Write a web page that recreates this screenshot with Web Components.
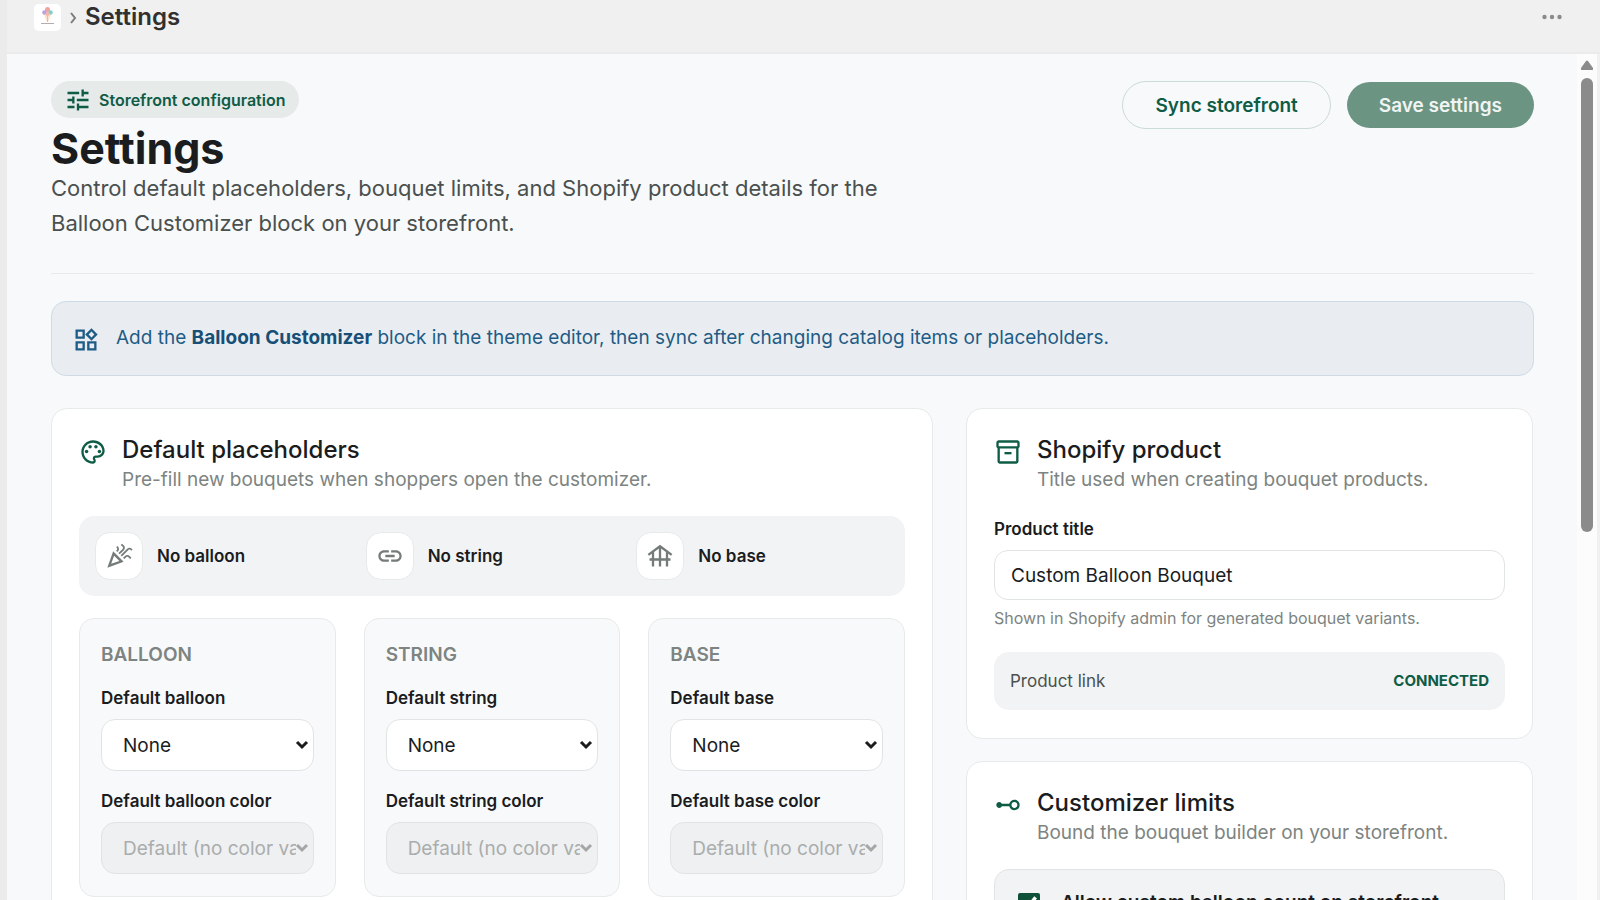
<!DOCTYPE html>
<html lang="en">
<head>
<meta charset="utf-8">
<meta name="viewport" content="width=device-width, initial-scale=1">
<title>Settings</title>
<style>
	:root {
		--ink: #1a1c1e;
		--muted: #7d8481;
		--body: #4a504e;
		--green: #0f5c46;
		--line: #e7eaea;
		--page: #f8f9fb;
		--soft: #f2f3f5;
	}

	body {
		margin: 0;
		font-family: Inter, sans-serif;
		color: var(--ink);
	}
</style>
</head>
<body>
<app-shell>
	<page-header slot="page">
		<span slot="badge">Storefront configuration</span>
		<span slot="title">Settings</span>
		<span slot="text">Control default placeholders, bouquet limits, and Shopify product details for the Balloon Customizer block on your storefront.</span>
	</page-header>

	<info-banner slot="page">Add the <strong>Balloon Customizer</strong> block in the theme editor, then sync after changing catalog items or placeholders.</info-banner>

	<settings-columns slot="page">
		<settings-card icon="palette" heading="Default placeholders" text="Pre-fill new bouquets when shoppers open the customizer.">
			<preview-bar></preview-bar>
			<placeholder-grid></placeholder-grid>
		</settings-card>

		<settings-card slot="side" icon="archive" heading="Shopify product" text="Title used when creating bouquet products.">
			<text-field label="Product title" value="Custom Balloon Bouquet" hint="Shown in Shopify admin for generated bouquet variants."></text-field>
			<status-row label="Product link">Connected</status-row>
		</settings-card>

		<settings-card slot="side" icon="range" heading="Customizer limits" text="Bound the bouquet builder on your storefront.">
			<check-row>Allow custom balloon count on storefront</check-row>
		</settings-card>
	</settings-columns>
</app-shell>

<script>
const icons = {
	tune: '<path d="M3 17v2h6v-2H3zM3 5v2h10V5H3zm10 16v-2h8v-2h-8v-2h-2v6h2zM7 9v2H3v2h4v2h2V9H7zm14 4v-2H11v2h10zm-6-4h2V7h4V5h-4V3h-2v6z"/>',
	widgets: '<path fill-rule="evenodd" d="M16.7 2l5.3 5.3-5.3 5.4-5.4-5.4zM16.7 4.8l-2.5 2.5 2.5 2.6 2.5-2.6zM3 3h8v8H3zM5 5v4h4V5zM3 13h8v8H3zM5 15v4h4v-4zM13 13h8v8h-8zM15 15v4h4v-4z"/>',
	palette: '<path d="M12 22C6.5 22 2 17.5 2 12S6.5 2 12 2s10 4 10 9c0 3.3-2.7 6-6 6h-1.8c-.3 0-.5.2-.5.5 0 .1.1.2.1.3.4.5.6 1.1.6 1.7.1 1.4-1 2.5-2.4 2.5zm0-18c-4.4 0-8 3.6-8 8s3.6 8 8 8c.3 0 .5-.2.5-.5 0-.2-.1-.3-.1-.4-.4-.5-.6-1.1-.6-1.6 0-1.4 1.1-2.5 2.5-2.5H16c2.2 0 4-1.8 4-4 0-3.9-3.6-7-8-7z"/><circle cx="6.5" cy="11.5" r="1.5"/><circle cx="9.5" cy="7.5" r="1.5"/><circle cx="14.5" cy="7.5" r="1.5"/><circle cx="17.5" cy="11.5" r="1.5"/>',
	archive: '<path d="M20 2H4c-1 0-2 .9-2 2v3.01c0 .72.43 1.34 1 1.69V20c0 1.1 1.1 2 2 2h14c.9 0 2-.9 2-2V8.7c.57-.35 1-.97 1-1.69V4c0-1.1-1-2-2-2zm-1 18H5V9h14v11zm1-13H4V4h16v3z"/><path d="M9 12h6v2H9z"/>',
	range: '<path d="M17.500 7.500c-2.100 0-3.900 1.500-4.400 3.500H6.700C6.300 10.100 5.500 9.500 4.500 9.500 3.100 9.500 2 10.600 2 12s1.100 2.500 2.500 2.500c1 0 1.800-.6 2.200-1.500h6.400c.5 2 2.300 3.500 4.400 3.500 2.500 0 4.500-2 4.500-4.500s-2-4.500-4.500-4.500zm0 7c-1.400 0-2.500-1.100-2.500-2.500s1.100-2.500 2.500-2.500S20 10.600 20 12s-1.100 2.500-2.500 2.500z"/>',
	celebration: '<path d="M2 22l14-5-9-9-5 14zm3.300-3.300L7.800 11.700l4.500 4.500-7 2.500zM14.500 12.500l5.600-5.600c.5-.5 1.300-.5 1.800 0l.6.6 1.100-1.100-.6-.6c-1.100-1.100-2.900-1.100-4 0l-5.600 5.600 1.100 1.100zM10.100 6.900l-.6.6 1.100 1.100.6-.6c1.100-1.100 1.100-2.900 0-4l-.6-.6-1.100 1.100.6.5c.5.5.5 1.400 0 1.900zM17.100 11.900l-1.600 1.600 1.100 1.100 1.600-1.600c.5-.5 1.300-.5 1.800 0l1.600 1.600 1.100-1.100-1.600-1.600c-1.100-1.100-2.900-1.100-4 0zM15.100 5.900l-3.600 3.600 1.100 1.100 3.600-3.600c1.100-1.100 1.100-2.900 0-4l-1.600-1.600-1.100 1.100 1.600 1.600c.5.500.5 1.300 0 1.800z"/>',
	link: '<path d="M3.900 12c0-1.700 1.400-3.100 3.100-3.100h4V7H7c-2.800 0-5 2.200-5 5s2.200 5 5 5h4v-1.900H7c-1.700 0-3.100-1.400-3.100-3.100zM8 13h8v-2H8v2zm9-6h-4v1.900h4c1.700 0 3.100 1.400 3.100 3.100s-1.400 3.100-3.100 3.100h-4V17h4c2.800 0 5-2.200 5-5s-2.200-5-5-5z"/>',
	gazebo: '<path fill="none" stroke="currentColor" stroke-width="2" d="M2 11L12 3.600 22 11M3 15h18M6 8.500V21M12 4v17M18 8.500V21"/>'
}

const icon = (name, size = 28) => `
	<svg width="${size}" height="${size}" viewBox="0 0 24 24" fill="currentColor" aria-hidden="true">${icons[name]}</svg>
`

// shared by every element, goes in front of its own rules
const base = `
	*, :host {
		box-sizing: border-box;
	}

	:host {
		display: block;
	}

	h1, h2, h3, p {
		margin: 0;
	}

	svg {
		display: block;
		flex: none;
	}
`

function render(el, css, html) {
	const shadow = el.attachShadow({ mode: 'open' })
	const template = document.createElement('template')
	template.innerHTML = `<style>${base}${css}</style>${html}`
	shadow.appendChild(template.content.cloneNode(true))
}

class AppShell extends HTMLElement {
	constructor() {
		super()
		render(this, `
			:host {
				display: flex;
				flex-direction: column;
				height: 100vh;
				overflow: hidden;
				border-left: 7px solid #ebebeb;
				background: #f0f0f0;
			}

			header {
				flex: none;
				display: flex;
				align-items: center;
				padding: 3px 35px 21px 27px;
				border-bottom: 2px solid #ebebeb;
			}

			.logo {
				width: 27px;
				height: 27px;
				border-radius: 5px;
				background: #fff;
			}

			.arrow {
				margin: 0 7px 0 8px;
				color: #7b7b7b;
			}

			h1 {
				font-size: 24px;
				line-height: 28px;
				font-weight: 600;
				color: #303030;
			}

			.more {
				margin-left: auto;
				padding: 0;
				border: 0;
				background: none;
				color: #8a8a8a;
			}

			.frame {
				flex: 1;
				min-height: 0;
				display: flex;
				padding-right: 3px;
			}

			main {
				flex: 1;
				min-width: 0;
				overflow: hidden;
				padding: 27px 43px 28px 44px;
				background: var(--page);
			}

			.scroll {
				flex: none;
				display: flex;
				flex-direction: column;
				align-items: center;
				gap: 8px;
				width: 20px;
				padding-top: 6px;
				background: #fcfcfc;
				color: #8b8b8b;
			}

			.thumb {
				width: 12px;
				height: 54%;
				border-radius: 6px;
				background: #8b8b8b;
			}
		`, `
			<header>
				<svg class="logo" viewBox="0 0 27 27" aria-hidden="true">
					<path d="M10 11h7l-3 7h-1z" fill="#fbe3cf"/>
					<circle cx="13.500" cy="5.500" r="2.500" fill="#f4a09c"/>
					<circle cx="10.500" cy="8.500" r="2.300" fill="#b9a0de"/>
					<circle cx="16.500" cy="8.500" r="2.300" fill="#86cfc8"/>
					<circle cx="13.500" cy="10" r="2" fill="#f7b6a4"/>
					<path d="M13.500 12v6" stroke="#f0bd92"/>
					<path d="M7 19.500h13" stroke="#b5adab"/>
				</svg>
				<svg class="arrow" width="9" height="14" viewBox="0 0 9 14" fill="none" stroke="currentColor" stroke-width="2" aria-hidden="true"><path d="M2 3l4 5-4 5"/></svg>
				<h1>Settings</h1>
				<button class="more" type="button" aria-label="More actions">
					<svg width="26" height="14" viewBox="0 0 26 14" fill="currentColor"><circle cx="5.500" cy="7" r="2.200"/><circle cx="13" cy="7" r="2.200"/><circle cx="20.500" cy="7" r="2.200"/></svg>
				</button>
			</header>
			<div class="frame">
				<main><slot name="page"></slot></main>
				<div class="scroll" aria-hidden="true">
					<svg width="12" height="10" viewBox="0 0 12 10" fill="currentColor"><path d="M5 1q1-1 2 0l5 7q.5 2-1 2H1Q-.5 10 0 8z"/></svg>
					<div class="thumb"></div>
				</div>
			</div>
		`)
	}
}

class PageHeader extends HTMLElement {
	constructor() {
		super()
		render(this, `
			:host {
				display: flex;
				justify-content: space-between;
				align-items: flex-start;
				padding-bottom: 32px;
				border-bottom: 1px solid var(--line);
			}

			.badge {
				display: inline-flex;
				align-items: center;
				gap: 7px;
				height: 37px;
				padding: 0 14px 0 13px;
				border-radius: 19px;
				background: #e6eae9;
				color: var(--green);
				font-size: 16px;
				font-weight: 600;
			}

			.intro {
				display: flex;
				flex-direction: column;
				align-items: flex-start;
			}

			h1 {
				margin-top: 8px;
				font-size: 43px;
				line-height: 45px;
				font-weight: 700;
			}

			p {
				max-width: 880px;
				font-size: 22px;
				line-height: 35px;
				color: var(--body);
			}

			.actions {
				display: flex;
				align-items: center;
				gap: 16px;
			}

			button {
				padding: 12px 32px 10px;
				border: 0;
				border-radius: 24px;
				font: 600 19px/24px Inter, sans-serif;
				white-space: nowrap;
			}

			.sync {
				border: 1px solid #cbdbd6;
				background: none;
				color: var(--green);
			}

			.save {
				background: #6b9483;
				color: #f0f4f3;
			}
		`, `
			<div class="intro">
				<div class="badge">${icon('tune')}<slot name="badge"></slot></div>
				<h1><slot name="title"></slot></h1>
				<p><slot name="text"></slot></p>
			</div>
			<div class="actions">
				<button class="sync" type="button">Sync storefront</button>
				<button class="save" type="button" disabled>Save settings</button>
			</div>
		`)
	}
}

class InfoBanner extends HTMLElement {
	constructor() {
		super()
		render(this, `
			:host {
				display: flex;
				align-items: flex-start;
				gap: 16px;
				margin-top: 27px;
				padding: 22px 20px 21px;
				border: 1px solid #cfdbe4;
				border-radius: 15px;
				background: #e9edf2;
				color: #1f5c85;
				font-size: 19px;
				line-height: 27px;
			}

			svg {
				margin-top: 2px;
			}

			::slotted(strong) {
				color: #174f77;
			}
		`, `${icon('widgets')}<div><slot></slot></div>`)
	}
}

class SettingsColumns extends HTMLElement {
	constructor() {
		super()
		render(this, `
			:host {
				display: grid;
				grid-template-columns: 14fr 9fr;
				gap: 33px;
				margin: 32px 1px 0 0;
			}

			.side {
				display: flex;
				flex-direction: column;
				gap: 22px;
				min-width: 0;
			}
		`, `
			<slot></slot>
			<div class="side"><slot name="side"></slot></div>
		`)
	}
}

class SettingsCard extends HTMLElement {
	constructor() {
		super()
		render(this, `
			:host {
				display: flex;
				flex-direction: column;
				gap: 22px;
				min-width: 0;
				padding: 26px 27px 28px;
				border: 1px solid var(--line);
				border-radius: 16px;
				background: #fff;
			}

			header {
				display: flex;
				gap: 15px;
			}

			svg {
				margin-top: 3px;
				color: var(--green);
			}

			h2 {
				font-size: 24px;
				line-height: 30px;
				font-weight: 500;
			}

			p {
				font-size: 19px;
				line-height: 29px;
				color: var(--muted);
			}
		`, `
			<header>
				${icon(this.getAttribute('icon'))}
				<div>
					<h2>${this.getAttribute('heading')}</h2>
					<p>${this.getAttribute('text')}</p>
				</div>
			</header>
			<slot></slot>
		`)
	}
}

class PreviewBar extends HTMLElement {
	constructor() {
		super()
		const items = [['celebration', 'No balloon'], ['link', 'No string'], ['gazebo', 'No base']]
		render(this, `
			:host {
				display: grid;
				grid-template-columns: repeat(3, 1fr);
				gap: 18px;
				padding: 16px;
				border-radius: 15px;
				background: var(--soft);
			}

			.item {
				display: flex;
				align-items: center;
				gap: 14px;
				font-size: 17px;
				font-weight: 600;
			}

			.tile {
				display: grid;
				place-items: center;
				width: 48px;
				height: 48px;
				border: 1px solid var(--line);
				border-radius: 15px;
				background: #fff;
				color: #747b78;
			}
		`, items.map(([name, text]) => `
			<div class="item"><div class="tile">${icon(name)}</div>${text}</div>
		`).join(''))
	}
}

class PlaceholderGrid extends HTMLElement {
	constructor() {
		super()
		render(this, `
			:host {
				display: grid;
				grid-template-columns: repeat(3, minmax(0, 1fr));
				gap: 28px;
			}

			section {
				padding: 22px 21px;
				border: 1px solid var(--line);
				border-radius: 15px;
				background: var(--page);
			}

			h3 {
				font-size: 19px;
				line-height: 28px;
				font-weight: 600;
				text-transform: uppercase;
				color: var(--muted);
			}

			label {
				display: block;
				margin: 16px 0 8px;
				font-size: 17px;
				line-height: 26px;
				font-weight: 600;
			}

			select + svg + label {
				margin-top: 17px;
			}

			.pick {
				display: grid;
				align-items: center;
			}

			.pick + label {
				margin-top: 17px;
			}

			.pick > * {
				grid-area: 1 / 1;
			}

			.pick svg {
				justify-self: end;
				margin-right: 5px;
				color: var(--ink);
				pointer-events: none;
			}

			.pick :disabled + svg {
				color: #a3a7a6;
			}

			select {
				appearance: none;
				width: 100%;
				height: 52px;
				padding: 0 17px 0 21px;
				border: 1px solid #e1e4e4;
				border-radius: 14px;
				background-color: #fff;
				color: var(--ink);
				font: 400 19px Inter, sans-serif;
			}

			select:disabled {
				background-color: #eff0f2;
				color: #a9adac;
				opacity: 1;
			}
		`, ['balloon', 'string', 'base'].map((part) => `
			<section>
				<h3>${part}</h3>
				<label for="${part}">Default ${part}</label>
				<div class="pick">
					<select id="${part}"><option>None</option></select>
					${this.chevron}
				</div>
				<label for="${part}-color">Default ${part} color</label>
				<div class="pick">
					<select id="${part}-color" disabled><option>Default (no color variants)</option></select>
					${this.chevron}
				</div>
			</section>
		`).join(''))
	}

	get chevron() {
		return `<svg width="14" height="10" viewBox="0 0 14 10" fill="none" stroke="currentColor" stroke-width="3" aria-hidden="true"><path d="M2 2l5 5 5-5"/></svg>`
	}
}

class TextField extends HTMLElement {
	constructor() {
		super()
		render(this, `
			label {
				display: block;
				margin-bottom: 8px;
				font-size: 17px;
				line-height: 26px;
				font-weight: 600;
			}

			input {
				display: block;
				width: 100%;
				height: 50px;
				padding: 0 16px;
				border: 1px solid #e1e4e4;
				border-radius: 14px;
				background: #fff;
				color: var(--ink);
				font: 400 19px Inter, sans-serif;
			}

			p {
				margin-top: 6px;
				font-size: 16px;
				line-height: 24px;
				color: var(--muted);
			}
		`, `
			<label for="field">${this.getAttribute('label')}</label>
			<input id="field" type="text" value="${this.getAttribute('value')}">
			<p>${this.getAttribute('hint')}</p>
		`)
	}
}

class StatusRow extends HTMLElement {
	constructor() {
		super()
		render(this, `
			:host {
				display: flex;
				justify-content: space-between;
				align-items: center;
				padding: 16px;
				border-radius: 15px;
				background: var(--soft);
				font-size: 17px;
				line-height: 26px;
				color: var(--body);
			}

			strong {
				font-size: 15px;
				text-transform: uppercase;
				color: var(--green);
			}
		`, `<span>${this.getAttribute('label')}</span><strong><slot></slot></strong>`)
	}
}

class CheckRow extends HTMLElement {
	constructor() {
		super()
		render(this, `
			:host {
				padding: 20px 23px;
				border: 1px solid #e1e4e4;
				border-radius: 15px;
				background: var(--soft);
			}

			label {
				display: flex;
				align-items: flex-start;
				gap: 21px;
				font-size: 19px;
				line-height: 26px;
				font-weight: 600;
			}

			input {
				flex: none;
				width: 22px;
				height: 22px;
				margin: 3px 0 0;
				accent-color: #0f5038;
			}
		`, `<label><input type="checkbox" checked><span><slot></slot></span></label>`)
	}
}

customElements.define('app-shell', AppShell)
customElements.define('page-header', PageHeader)
customElements.define('info-banner', InfoBanner)
customElements.define('settings-columns', SettingsColumns)
customElements.define('settings-card', SettingsCard)
customElements.define('preview-bar', PreviewBar)
customElements.define('placeholder-grid', PlaceholderGrid)
customElements.define('text-field', TextField)
customElements.define('status-row', StatusRow)
customElements.define('check-row', CheckRow)
</script>
</body>
</html>
